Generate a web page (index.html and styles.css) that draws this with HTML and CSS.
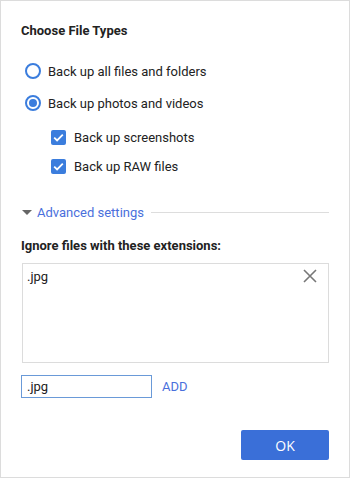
FILE: index.html
```html
<!DOCTYPE html>
<html lang="en">
<head>
  <meta charset="UTF-8">
  <meta name="viewport" content="width=device-width, initial-scale=1.0">
  <title>Choose File Types</title>
  <link rel="stylesheet" href="styles.css">
</head>
<body>
<div class="dialog">
  <!-- Title -->
  <div class="dialog-title">Choose File Types</div>

  <!-- Backup options -->
  <div class="options">
    <label class="radio-row">
      <span class="radio"></span>
      <span>Back up all files and folders</span>
    </label>
    <label class="radio-row">
      <span class="radio checked"></span>
      <span>Back up photos and videos</span>
    </label>
    <div class="sub-options">
      <label class="check-row">
        <span class="checkbox">
          <svg width="15" height="15" viewBox="0 0 15 15"><path d="M3.2 7.6l2.9 2.9 5.7-5.8" fill="none" stroke="#fff" stroke-width="1.8"/></svg>
        </span>
        <span>Back up screenshots</span>
      </label>
      <label class="check-row">
        <span class="checkbox">
          <svg width="15" height="15" viewBox="0 0 15 15"><path d="M3.2 7.6l2.9 2.9 5.7-5.8" fill="none" stroke="#fff" stroke-width="1.8"/></svg>
        </span>
        <span>Back up RAW files</span>
      </label>
    </div>
  </div>

  <!-- Advanced -->
  <div class="advanced">
    <span class="triangle"></span>
    <a href="#" class="advanced-link">Advanced settings</a>
    <span class="advanced-line"></span>
  </div>

  <div class="section-label">Ignore files with these extensions:</div>

  <div class="ext-list">
    <div class="ext-item">
      <span>.jpg</span>
      <svg class="remove-icon" width="16" height="16" viewBox="0 0 16 16"><path d="M2 2l12 12M14 2L2 14" stroke="#777" stroke-width="1.6"/></svg>
    </div>
  </div>

  <div class="add-row">
    <input type="text" class="ext-input" value=".jpg">
    <a href="#" class="add-link">ADD</a>
  </div>

  <div class="footer">
    <button class="ok-button">OK</button>
  </div>
</div>
</body>
</html>
```

FILE: styles.css
```css
body, html {
  margin: 0;
  padding: 0;
  font-family: Roboto, "Liberation Sans", sans-serif;
  background: white;
  color: #222;
}

.dialog {
  width: 350px;
  height: 478px;
  box-sizing: border-box;
  border: 1px solid #dcdcdc;
  padding: 21px 20px 0 20px;
  display: flex;
  flex-direction: column;
}

.dialog-title {
  font-size: 13px;
  font-weight: bold;
  line-height: 18px;
}

.options {
  margin-top: 15px;
  display: flex;
  flex-direction: column;
  font-size: 13px;
}

.radio-row {
  display: flex;
  align-items: center;
  height: 32px;
  padding-left: 4px;
  gap: 7px;
}

.radio {
  width: 16px;
  height: 16px;
  box-sizing: border-box;
  border: 2px solid #3b7ddd;
  border-radius: 50%;
  display: flex;
  align-items: center;
  justify-content: center;
}

.radio.checked::after {
  content: "";
  width: 8px;
  height: 8px;
  border-radius: 50%;
  background: #3b7ddd;
}

.sub-options {
  margin-top: 4px;
  display: flex;
  flex-direction: column;
}

.check-row {
  display: flex;
  align-items: center;
  height: 29px;
  padding-left: 30px;
  gap: 8px;
}

.checkbox {
  width: 15px;
  height: 15px;
  border-radius: 2px;
  background: #3b7ddd;
  display: flex;
}

.advanced {
  margin-top: 22px;
  height: 18px;
  display: flex;
  align-items: center;
  font-size: 13px;
}

.triangle {
  width: 0;
  height: 0;
  margin-left: 1px;
  border-left: 5px solid transparent;
  border-right: 5px solid transparent;
  border-top: 5px solid #666;
}

.advanced-link {
  color: #4a6fdc;
  text-decoration: none;
  margin-left: 5px;
}

.advanced-line {
  flex: 1;
  height: 1px;
  background: #ddd;
  margin-left: 7px;
}

.section-label {
  margin-top: 16px;
  font-size: 13px;
  font-weight: bold;
  line-height: 18px;
}

.ext-list {
  margin-top: 8px;
  margin-left: 1px;
  height: 100px;
  box-sizing: border-box;
  border: 1px solid #dcdcdc;
  padding: 3px 10px 0 4px;
}

.ext-item {
  display: flex;
  align-items: center;
  justify-content: space-between;
  font-size: 13px;
  height: 18px;
}

.ext-input {
  width: 131px;
  height: 23px;
  box-sizing: border-box;
  border: 1px solid #6a9ad8;
  padding: 0 5px;
  font-family: Roboto, "Liberation Sans", sans-serif;
  font-size: 13px;
  color: #222;
  outline: none;
}

.add-row {
  margin-top: 12px;
  display: flex;
  align-items: center;
  gap: 10px;
}

.add-link {
  color: #4a6fdc;
  text-decoration: none;
  font-size: 13px;
}

.footer {
  margin-top: 32px;
  display: flex;
  justify-content: flex-end;
}

.ok-button {
  width: 88px;
  height: 30px;
  background: #3a6fd8;
  color: white;
  border: none;
  border-radius: 2px;
  font-family: "Open Sans", Roboto, sans-serif;
  font-size: 14px;
  cursor: pointer;
}
```
